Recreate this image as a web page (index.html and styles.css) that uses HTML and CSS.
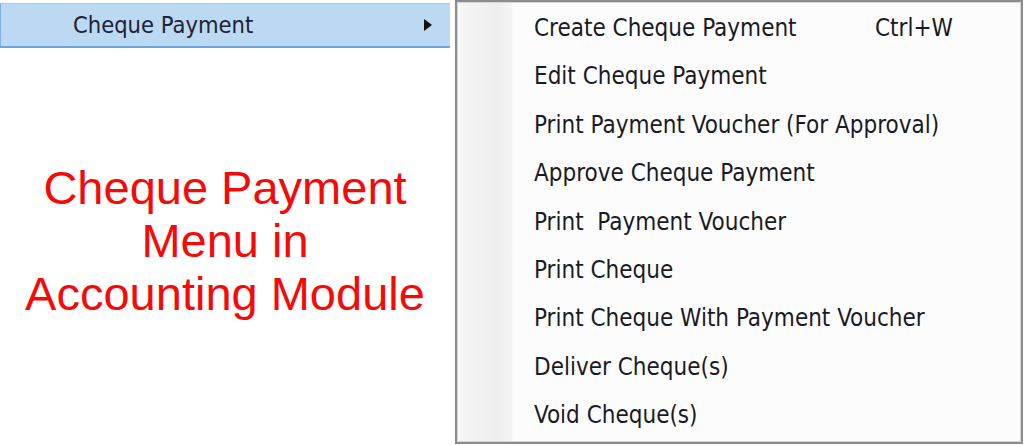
FILE: index.html
```html
<!DOCTYPE html>
<html lang="en">
<head>
  <meta charset="UTF-8">
  <title>Cheque Payment Menu</title>
  <link rel="stylesheet" href="styles.css">
</head>
<body>
  <div class="page">
    <div class="side">
      <div class="parent-item">
        <span class="parent-label">Cheque Payment</span>
        <span class="submenu-arrow"></span>
      </div>
      <h1 class="caption">Cheque Payment<br>Menu in<br>Accounting Module</h1>
    </div>

    <ul class="menu">
      <li class="menu-item"><span class="label">Create Cheque Payment</span><span class="shortcut">Ctrl+W</span></li>
      <li class="menu-item"><span class="label">Edit Cheque Payment</span></li>
      <li class="menu-item"><span class="label">Print Payment Voucher (For Approval)</span></li>
      <li class="menu-item"><span class="label">Approve Cheque Payment</span></li>
      <li class="menu-item"><span class="label">Print&nbsp; Payment Voucher</span></li>
      <li class="menu-item"><span class="label">Print Cheque</span></li>
      <li class="menu-item"><span class="label">Print Cheque With Payment Voucher</span></li>
      <li class="menu-item"><span class="label">Deliver Cheque(s)</span></li>
      <li class="menu-item"><span class="label">Void Cheque(s)</span></li>
    </ul>
  </div>
</body>
</html>
```

FILE: styles.css
```css
body {
  margin: 0;
  padding: 0;
  background: #ffffff;
  font-family: "DejaVu Sans Condensed", "DejaVu Sans", sans-serif;
  font-stretch: condensed;
}

.page {
  display: flex;
  gap: 5px;
  width: 1024px;
  height: 445px;
}

/* left column: highlighted parent entry + caption */
.side {
  width: 450px;
  flex-shrink: 0;
  padding-top: 3px;
}

.parent-item {
  display: flex;
  align-items: center;
  justify-content: space-between;
  height: 42px;
  padding: 0 18px 0 72px;
  background: #bcd9f4;
  border-top: 1px solid #a6cbef;
  border-left: 1px solid #7fb0e2;
  border-bottom: 2px solid #69a5df;
}

.parent-label {
  font-size: 23.5px;
  color: #1e2233;
}

.submenu-arrow {
  width: 0;
  height: 0;
  border-top: 6px solid transparent;
  border-bottom: 6px solid transparent;
  border-left: 8px solid #111;
}

.caption {
  margin: 113px 0 0;
  font-family: "Liberation Sans", Arial, sans-serif;
  font-weight: normal;
  font-size: 47px;
  line-height: 53px;
  color: #f50a0a;
  text-align: center;
}

/* right: the popup menu */
.menu {
  flex: 1;
  margin: 0 1px 1px 0;
  padding: 2px 0 0;
  list-style: none;
  border: 2px solid #8c8c8c;
  box-shadow: inset 0 0 0 1px #d6d6d6;
  background:
    linear-gradient(to right, #f8f8f8 0, #f3f3f3 14px, #eeeeee 40px, #f4f4f4 54px, #fcfcfc 56px);
}

.menu-item {
  display: flex;
  height: 48.4px;
  line-height: 48.4px;
  padding-left: 77px;
  font-size: 24px;
  color: #1a1a24;
  white-space: nowrap;
}

.menu-item .label {
  width: 341px;
}
```
